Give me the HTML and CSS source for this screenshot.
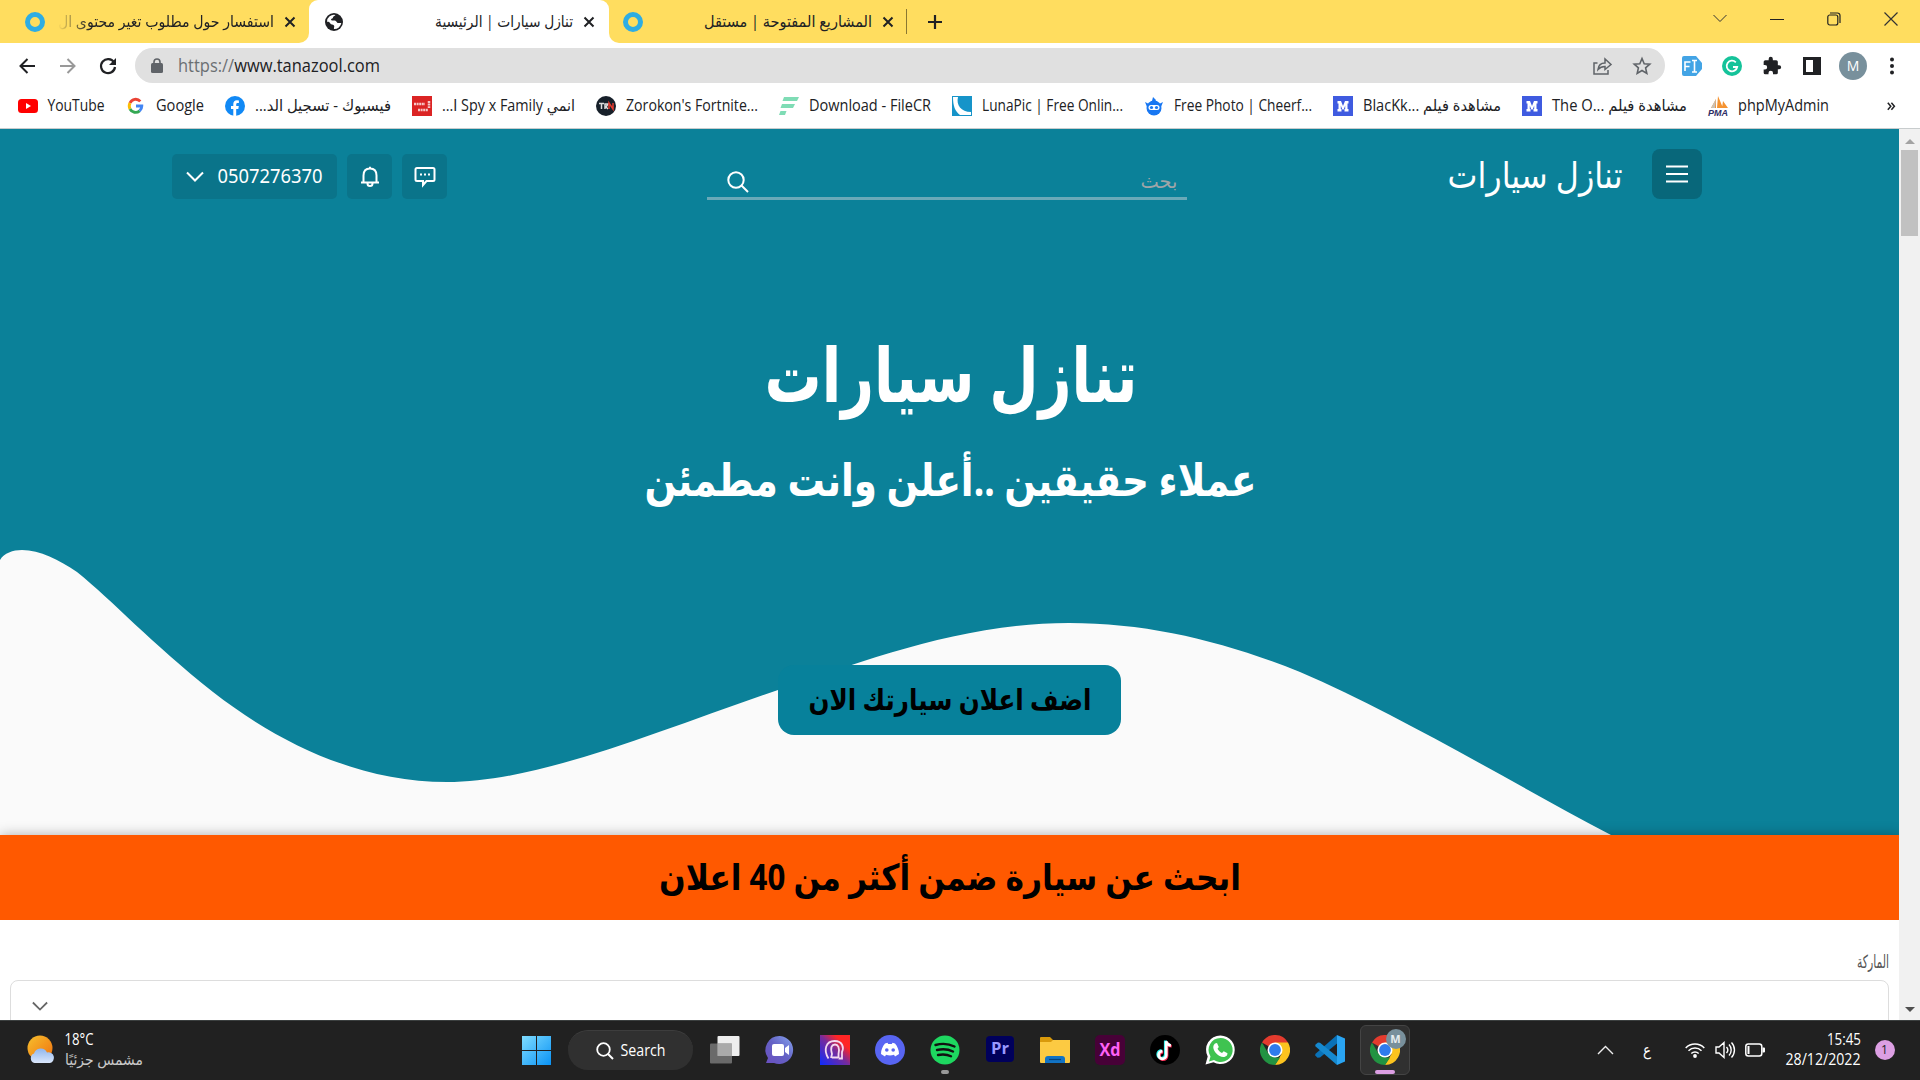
FILE: index.html
```html
<!DOCTYPE html>
<html lang="ar">
<head>
<meta charset="utf-8">
<title>تنازل سيارات | الرئيسية</title>
<link rel="stylesheet" href="styles.css">
</head>
<body>
<svg width="0" height="0" class="defs">
  <defs>
    <symbol id="x" viewBox="0 0 12 12"><path d="M1.500 1.500l9 9m0-9l-9 9" stroke="#202124" stroke-width="2"/></symbol>
    <symbol id="down" viewBox="0 0 18 12"><path d="M1 1.500l8 8 8-8" fill="none" stroke="currentColor" stroke-width="2"/></symbol>
    <symbol id="mbox" viewBox="0 0 20 20"><path fill="#3f5be0" d="M0 0h20v20H0z"/><path fill="#fff" d="M4.500 5h3.500l2 5 2-5h3.500v2.500h-1v5.500h1v2.500h-4v-2.500h.7v-3.500l-1.500 4h-1.400l-1.500-4v3.500h.7v2.500h-4v-2.500h1V7.500h-1z"/></symbol>
    <symbol id="chrome" viewBox="0 0 30 30"><path fill="#e33b2e" d="M15 15L2 7.500A15 15 0 0 1 28 7.500z"/><path fill="#fcc31e" d="M15 7.500h13A15 15 0 0 1 15 30l6.500-11z"/><path fill="#229342" d="M2 7.500l6.500 11.300L15 22.500l5 .2L15 30A15 15 0 0 1 2 7.500z"/><circle cx="15" cy="15" r="7.500" fill="#fff"/><circle cx="15" cy="15" r="5.900" fill="#2f7bed"/></symbol>
  </defs>
</svg>

<header class="tabs">
  <div class="tab first">
    <i class="ring"></i>
    <svg class="title fade" width="216" height="24"><text x="108" y="16.500" textLength="216" lengthAdjust="spacingAndGlyphs">استفسار حول مطلوب تغير محتوى ال</text></svg>
    <svg class="close" width="12" height="12"><use href="#x"/></svg>
  </div>
  <div class="tab active">
    <svg width="18" height="18" viewBox="0 0 18 18"><circle cx="9" cy="9" r="9" fill="#202124"/><path fill="#fff" d="M10.500 2c-1 1.500-2.500 1-2.500 2.500 0 1.200-2 1-2 2.300 0 1.200 3 .4 4.500 1 1.500.7 1 2.200 2.500 2.200h3.300A7 7 0 0 1 9 16c-.4-1.500.8-2.200 0-3.500-.8-1.200-3.500-.8-4-2.500C4.500 8.500 2.500 9 2 8.800A7 7 0 0 1 10.500 2z"/></svg>
    <svg class="title" width="138" height="24"><text x="69" y="16.500" textLength="138" lengthAdjust="spacingAndGlyphs">تنازل سيارات | الرئيسية</text></svg>
    <svg class="close" width="12" height="12"><use href="#x"/></svg>
  </div>
  <div class="tab last">
    <i class="ring"></i>
    <svg class="title" width="168" height="24"><text x="84" y="16.500" textLength="168" lengthAdjust="spacingAndGlyphs">المشاريع المفتوحة | مستقل</text></svg>
    <svg class="close" width="12" height="12"><use href="#x"/></svg>
  </div>
  <svg class="plus" width="16" height="16"><path d="M8 1v14M1 8h14" stroke="#202124" stroke-width="2.200"/></svg>
  <div class="window">
    <svg width="14" height="9"><path d="M.5 1l6.500 6.500L13.500 1" fill="none" stroke="#333"/></svg>
    <svg width="14" height="14"><path d="M0 7.500h14" stroke="#222"/></svg>
    <svg width="14" height="14"><rect x=".8" y="3" width="10" height="10" rx="2" fill="none" stroke="#222" stroke-width="1.200"/><path d="M3 1h7.500a2.500 2.500 0 0 1 2.500 2.500V11" fill="none" stroke="#222" stroke-width="1.200"/></svg>
    <svg width="14" height="14"><path d="M.5.500l13 13m0-13l-13 13" stroke="#333" stroke-width="1.200"/></svg>
  </div>
</header>

<div class="toolbar">
  <div class="nav">
    <svg width="17" height="16" viewBox="0 0 17 16"><path d="M16 8H2m6.500-7L1.500 8l7 7" fill="none" stroke="#202124" stroke-width="2"/></svg>
    <svg width="17" height="16" viewBox="0 0 17 16"><path d="M1 8h14M8.500 1l7 7-7 7" fill="none" stroke="#999" stroke-width="2"/></svg>
    <svg width="18" height="18" viewBox="0 0 18 18"><path d="M15 5.500A7 7 0 1 0 16 10" fill="none" stroke="#202124" stroke-width="2.200"/><path d="M17 1v7h-7z" fill="#202124"/></svg>
  </div>
  <div class="omnibox">
    <svg width="12" height="15"><rect y="5" width="12" height="10" rx="1.500" fill="#5f6368"/><path d="M3 6V4a3 3 0 0 1 6 0v2" fill="none" stroke="#5f6368" stroke-width="1.600"/></svg>
    <svg class="url" width="202" height="26"><text x="101" y="19" textLength="202" lengthAdjust="spacingAndGlyphs"><tspan fill="#6b6f73">https://</tspan>www.tanazool.com</text></svg>
    <svg class="share" width="20" height="18"><path d="M4.500 6H1v11h14v-4M5 12.500c.5-4.500 3-6.500 7-6.500V2l6 5.500-6 5V9.500c-3 0-5 .7-7 3z" fill="none" stroke="#5f6368" stroke-width="1.500"/></svg>
    <svg width="18" height="18" viewBox="0 0 18 18"><path d="M9 1.500l2.200 5.200 5.600.5-4.200 3.700 1.200 5.500L9 13.500l-4.800 2.900 1.200-5.500L1.200 7.200l5.600-.5z" fill="none" stroke="#5f6368" stroke-width="1.600"/></svg>
  </div>
  <div class="extensions">
    <svg width="20" height="20"><path d="M2 0h12l6 7v6l-6 7H2a2 2 0 0 1-2-2V2a2 2 0 0 1 2-2z" fill="#43a4e5"/><path d="M3 15V6h5.500M3 10.500h4.500M10 4.500h5M10 16h5M12.500 4.500V16" fill="none" stroke="#fff" stroke-width="1.600"/></svg>
    <svg width="20" height="20"><circle cx="10" cy="10" r="10" fill="#15c39a"/><path d="M13.800 6.300A5.300 5.300 0 1 0 15.200 11H11" fill="none" stroke="#fff" stroke-width="1.800"/></svg>
    <svg width="20" height="20" viewBox="0 0 24 24"><path fill="#202124" d="M20.500 11H19V7a2 2 0 0 0-2-2h-4V3.500a2.500 2.500 0 0 0-5 0V5H4a2 2 0 0 0-2 2v3.800h1.500a2.700 2.700 0 0 1 0 5.400H2V20a2 2 0 0 0 2 2h3.800v-1.500a2.700 2.700 0 0 1 5.400 0V22H17a2 2 0 0 0 2-2v-4h1.500a2.500 2.500 0 0 0 0-5z"/></svg>
    <svg width="20" height="20"><path d="M1 1h18v18H1zm3 3v12h7V4z" fill="#202124" fill-rule="evenodd"/></svg>
    <span class="avatar">M</span>
    <svg class="dots" width="4" height="18"><circle cx="2" cy="2.500" r="2"/><circle cx="2" cy="9" r="2"/><circle cx="2" cy="15.500" r="2"/></svg>
  </div>
</div>

<nav class="bookmarks">
  <a><svg width="20" height="20"><rect y="3" width="20" height="14" rx="3.500" fill="#f00"/><path d="M8 7l5 3-5 3z" fill="#fff"/></svg>
    <svg width="57" height="22"><text x="28" y="16" textLength="57" lengthAdjust="spacingAndGlyphs">YouTube</text></svg></a>
  <a><svg width="20" height="20" viewBox="0 0 20 20"><g fill="none" stroke-width="2.900"><path stroke="#ea4335" d="M4 7a6.200 6.200 0 0 1 10.300-1.600"/><path stroke="#fbbc05" d="M4 13a6.500 6.500 0 0 1 0-6"/><path stroke="#34a853" d="M4 13a6.200 6.200 0 0 0 9.600 1.800"/><path stroke="#4285f4" d="M13.600 14.800A6.300 6.300 0 0 0 15.800 10H10"/></g></svg>
    <svg width="48" height="22"><text x="24" y="16" textLength="48" lengthAdjust="spacingAndGlyphs">Google</text></svg></a>
  <a><svg width="20" height="20"><circle cx="10" cy="10" r="10" fill="#1189f5"/><path fill="#fff" d="M8.300 20v-7H6v-3h2.300V8c0-2.500 1.400-3.800 3.600-3.800l2 .2V7h-1.200c-1.200 0-1.500.7-1.500 1.400V10h2.600l-.5 3h-2.100v7z"/></svg>
    <svg width="136" height="22"><text x="68" y="16" textLength="136" lengthAdjust="spacingAndGlyphs" direction="rtl">فيسبوك - تسجيل الد...</text></svg></a>
  <a><svg width="20" height="20"><path fill="#db2424" d="M0 0h20v20H0z"/><path d="M2 8h11M6 14h10M17 5v7" stroke="#fff" stroke-width="2.500" stroke-dasharray="2 .6" opacity=".75"/></svg>
    <svg width="133" height="22"><text x="66.500" y="16" textLength="133" lengthAdjust="spacingAndGlyphs" direction="rtl">انمي Spy x Family ا...</text></svg></a>
  <a><svg width="20" height="20"><circle cx="10" cy="10" r="10" fill="#17202a"/><path d="M3 7.500h5M5.500 7v6M9 13V8h3l-2 3 2 2" fill="none" stroke="#ddd" stroke-width="1.500"/><path d="M13 13V7l4 6V7" fill="none" stroke="#e63a2e" stroke-width="1.500"/></svg>
    <svg width="132" height="22"><text x="66" y="16" textLength="132" lengthAdjust="spacingAndGlyphs">Zorokon's Fortnite...</text></svg></a>
  <a><svg width="20" height="20"><path fill="#7fdcb5" d="M5 1h15l-2 4H3.500zM3 8h13l-2 4H1.500zM1.500 15h6l-1.500 4H0z"/></svg>
    <svg width="122" height="22"><text x="61" y="16" textLength="122" lengthAdjust="spacingAndGlyphs">Download - FileCR</text></svg></a>
  <a><svg width="20" height="20"><path fill="#1694c9" d="M0 0h20v20H0z"/><path fill="#fff" d="M1 1h5c-2 8 3 15 13 15v3H8C3 15 1 10 1 1z"/></svg>
    <svg width="141" height="22"><text x="70.500" y="16" textLength="141" lengthAdjust="spacingAndGlyphs">LunaPic | Free Onlin...</text></svg></a>
  <a><svg width="20" height="20"><path d="M1 6l4 2a8 8 0 0 1 10 0l4-2-2 5a7 7 0 0 1-14 0zM8 5l1-4 3 3-1 2z" fill="#1877f2"/><circle cx="10" cy="12" r="7.500" fill="#1877f2"/><rect x="4.500" y="9" width="11" height="5" rx="2.500" fill="#fff"/><circle cx="7.500" cy="11.500" r="1.600" fill="#1877f2"/><circle cx="12.500" cy="11.500" r="1.600" fill="#1877f2"/></svg>
    <svg width="138" height="22"><text x="69" y="16" textLength="138" lengthAdjust="spacingAndGlyphs">Free Photo | Cheerf...</text></svg></a>
  <a><svg width="20" height="20"><use href="#mbox"/></svg>
    <svg width="138" height="22"><text x="69" y="16" textLength="138" lengthAdjust="spacingAndGlyphs">BlacKk... مشاهدة فيلم</text></svg></a>
  <a><svg width="20" height="20"><use href="#mbox"/></svg>
    <svg width="135" height="22"><text x="67.500" y="16" textLength="135" lengthAdjust="spacingAndGlyphs">The O... مشاهدة فيلم</text></svg></a>
  <a><svg width="20" height="20"><path d="M3 12l5-9v9zM9 12l1-12 5 12zM14 12l1-7 5 7z" fill="#f59331"/><path d="M3 12l5-9-1 9z" fill="#c9c2b8"/><text class="pma" x="10" y="19.500" textLength="20" lengthAdjust="spacingAndGlyphs">PMA</text></svg>
    <svg width="91" height="22"><text x="45.500" y="16" textLength="91" lengthAdjust="spacingAndGlyphs">phpMyAdmin</text></svg></a>
  <svg class="more" width="8" height="9"><path d="M.8.800l3 3.500-3 3.500M4.400.800l3 3.500-3 3.500" fill="none" stroke="#202124" stroke-width="1.500"/></svg>
</nav>

<main class="viewport">
  <div class="page">
    <section class="hero">
      <svg class="wave" width="1899" height="706"><path fill="#fafafa" d="M0 431C4 424 13 421 22 421C40 421 59 431 77 443C113 472 150 513 213 563C280 615 360 653 447 653C540 653 660 601 778 561C862 533 960 494 1069 494C1150 494 1225 513 1300 543C1400 586 1505 650 1611 706H0z"/></svg>
      <div class="bar">
        <div class="account">
          <span class="chip phone"><svg width="18" height="12"><use href="#down"/></svg><svg width="105" height="26"><text x="52" y="19" textLength="105" lengthAdjust="spacingAndGlyphs">0507276370</text></svg></span>
          <span class="chip"><svg width="20" height="22" viewBox="0 0 20 22"><path d="M1 16.500h18M3.500 16V9.500C3.500 5 6 2.500 10 2.500s6.500 2.500 6.500 7V16M7.500 17.500a2.500 2.500 0 0 0 5 0M10 .8v2" fill="none" stroke="#fff" stroke-width="2"/></svg></span>
          <span class="chip"><svg width="22" height="22" viewBox="0 0 22 22"><path d="M3 2h16a1.500 1.500 0 0 1 1.500 1.500v10A1.500 1.500 0 0 1 19 15h-6.500L9 19v-4H3a1.500 1.500 0 0 1-1.500-1.500v-10A1.500 1.500 0 0 1 3 2z" fill="none" stroke="#fff" stroke-width="2"/><path d="M6 8.500h2m2 0h2m2 0h2" stroke="#fff" stroke-width="2"/></svg></span>
        </div>
        <div class="search">
          <svg width="22" height="22"><circle cx="9" cy="9" r="7.700" fill="none" stroke="#fff" stroke-width="2"/><path d="M14.500 14.500l6.500 6.500" stroke="#fff" stroke-width="2"/></svg>
          <svg width="37" height="30"><text x="18" y="21" textLength="37" lengthAdjust="spacingAndGlyphs">بحث</text></svg>
        </div>
        <div class="brand">
          <svg width="174" height="50"><text x="87" y="39" textLength="175" lengthAdjust="spacingAndGlyphs">تنازل سيارات</text></svg>
          <span class="menu"><svg width="24" height="18"><path d="M1 1.500h22M1 9h22M1 16.500h22" stroke="#fff" stroke-width="2.200"/></svg></span>
        </div>
      </div>
      <svg class="h1" width="369" height="90"><text x="183" y="62" textLength="373" lengthAdjust="spacingAndGlyphs">تنازل سيارات</text></svg>
      <svg class="h2" width="609" height="60"><text x="304.500" y="43" textLength="612" lengthAdjust="spacingAndGlyphs" direction="rtl">عملاء حقيقين ..أعلن وانت مطمئن</text></svg>
      <a class="cta"><svg width="281" height="40"><text x="141" y="30" textLength="283" lengthAdjust="spacingAndGlyphs">اضف اعلان سيارتك الان</text></svg></a>
    </section>
    <section class="banner"><svg width="579" height="60"><text x="290" y="42" textLength="582" lengthAdjust="spacingAndGlyphs" direction="rtl">ابحث عن سيارة ضمن أكثر من 40 اعلان</text></svg></section>
    <section class="filters">
      <svg class="label" width="32" height="26"><text x="16" y="19" textLength="32" lengthAdjust="spacingAndGlyphs">الماركة</text></svg>
      <div class="select"><svg width="16" height="11"><use href="#down"/></svg></div>
    </section>
  </div>
  <aside class="scroll">
    <svg width="10" height="5"><path d="M0 5l5-5 5 5z" fill="#a3a3a3"/></svg>
    <i></i>
    <svg class="bottom" width="10" height="5"><path d="M0 0l5 5 5-5z" fill="#505050"/></svg>
  </aside>
</main>

<footer class="taskbar">
  <div class="weather">
    <svg width="29" height="30"><defs><linearGradient id="sun" x2="1" y2="1"><stop stop-color="#f6c02d"/><stop offset="1" stop-color="#f0700f"/></linearGradient><linearGradient id="cl" x2="0" y2="1"><stop stop-color="#8fb6ee"/><stop offset="1" stop-color="#dbe7fb"/></linearGradient></defs><circle cx="13" cy="13" r="12.500" fill="url(#sun)"/><path d="M7.500 28a5 5 0 0 1-.5-9.500 7 7 0 0 1 13-1 5.300 5.300 0 0 1 3 10.500z" fill="url(#cl)"/></svg>
    <div class="lines">
      <svg width="78" height="20"><text x="14" y="15" textLength="29" lengthAdjust="spacingAndGlyphs">18°C</text></svg>
      <svg class="dim" width="78" height="20"><text x="39" y="15" textLength="78" lengthAdjust="spacingAndGlyphs">مشمس جزئيًا</text></svg>
    </div>
  </div>
  <div class="apps">
    <span class="win"><svg width="29" height="29"><defs><linearGradient id="w" x2="1" y2="1"><stop stop-color="#7fdcff"/><stop offset="1" stop-color="#0a93f5"/></linearGradient></defs><path fill="url(#w)" d="M0 0h14v14H0zM15 0h14v14H15zM0 15h14v14H0zM15 15h14v14H15z"/></svg></span>
    <span class="pill"><svg width="18" height="18"><circle cx="7.500" cy="7.500" r="6.300" fill="none" stroke="#fff" stroke-width="1.800"/><path d="M12 12l5 5" stroke="#fff" stroke-width="2"/></svg><svg width="45" height="22"><text x="22" y="16" textLength="45" lengthAdjust="spacingAndGlyphs">Search</text></svg></span>
    <span class="app"><svg width="30" height="30"><rect x="7.500" y="1" width="22" height="20" rx="1" fill="#eee"/><rect y="8.500" width="22" height="20" rx="1" fill="#777" opacity=".85"/><path d="M7.500 8.500H22V21H7.500z" fill="#aaa"/></svg></span>
    <span class="app"><svg width="30" height="30"><defs><linearGradient id="tm" x1="1" x2="0" y2="1"><stop stop-color="#86a5f0"/><stop offset=".5" stop-color="#6461c4"/><stop offset="1" stop-color="#6a4fc0"/></linearGradient></defs><path d="M15 1a14 14 0 1 1-6 27H1l2-5A14 14 0 0 1 15 1z" fill="url(#tm)"/><rect x="7" y="9" width="12" height="12" rx="2" fill="#fff"/><path d="M20 13l4-3v10l-4-3z" fill="#fff"/></svg></span>
    <span class="app"><svg width="30" height="30"><defs><linearGradient id="pt" y1="1" x2="1" y2="0"><stop stop-color="#0b2bff"/><stop offset=".5" stop-color="#7a2b9a"/><stop offset=".75" stop-color="#ff2525"/></linearGradient></defs><path fill="url(#pt)" d="M0 0h30v30H0z"/><path d="M8.500 23.500C3 15 6 6 14.500 6S24 13 22 17v6.500h-3.500M11 23l1-4c-2-7 0-9.500 3-9.500s5 3 3.500 9.500v4M12 22.500h6" fill="none" stroke="#f4d9f0" stroke-width="1.800"/></svg></span>
    <span class="app"><svg width="30" height="30"><circle cx="15" cy="15" r="15" fill="#5865f2"/><path fill="#fff" d="M10 8.500l2.500-.7.700 1.200h3.600l.7-1.200 2.500.7c2.500 3 4 6.500 4 10.500L20 21.500l-1-1.700a12 12 0 0 1-8 0l-1 1.700L6 19c0-4 1.500-7.500 4-10.500z"/><circle cx="11.800" cy="15" r="1.800" fill="#5865f2"/><circle cx="18.200" cy="15" r="1.800" fill="#5865f2"/></svg></span>
    <span class="app running"><svg width="30" height="30"><circle cx="15" cy="15" r="14.500" fill="#1ed760"/><path d="M5.500 10c7-2 13-1.500 19 1.500M7 15c6-1.500 11-1 16 1.500M8 20c5-1 9-.7 13 1.300" fill="none" stroke="#111" stroke-width="2.400" stroke-linecap="round"/></svg></span>
    <span class="app"><svg width="28" height="28"><rect y="0" width="28" height="26" rx="4" fill="#00005b"/><text class="adobe pr" x="14" y="18" textLength="18" lengthAdjust="spacingAndGlyphs">Pr</text></svg></span>
    <span class="app"><svg width="30" height="30"><path d="M0 3a1 1 0 0 1 1-1h9l3 3v6H0z" fill="#d99a0b"/><path d="M0 7h11l2-2h17v22a1 1 0 0 1-1 1H1a1 1 0 0 1-1-1z" fill="#fcca42"/><path d="M5 28v-4a3 3 0 0 1 3-3h14a3 3 0 0 1 3 3v4z" fill="#1273c4"/><path d="M9 24.500h12" stroke="#07437c" stroke-width="1.200"/></svg></span>
    <span class="app"><svg width="30" height="30"><rect width="30" height="30" rx="5" fill="#470137"/><text class="adobe xd" x="15" y="21" textLength="21" lengthAdjust="spacingAndGlyphs">Xd</text></svg></span>
    <span class="app"><svg width="30" height="30"><circle cx="15" cy="15" r="15" fill="#000"/><g fill="none" stroke-width="2.800"><path stroke="#25f4ee" d="M15.300 5.500v14a3.800 3.800 0 1 1-3.800-4M15.300 5.500c.3 2.500 2 4 4.700 4.200"/><path stroke="#fe2c55" d="M17 7v14a3.800 3.800 0 1 1-3.800-4M17 7c.3 2.500 2 4 4.700 4.200"/><path stroke="#fff" d="M16.200 6.200v14a3.800 3.800 0 1 1-3.800-4M16.200 6.200c.3 2.500 2 4 4.700 4.200"/></g></svg></span>
    <span class="app"><svg width="30" height="30"><path d="M15.500.500a14.300 14.300 0 1 1-7 26.800L.5 29.500l2.200-8A14.300 14.300 0 0 1 15.500.500z" fill="#fff"/><path d="M15.500 3a12 12 0 1 1-6.500 22l-5 1.500 1.500-5A12 12 0 0 1 15.500 3z" fill="#3fc351"/><path d="M10 8.500l2-.5 1.800 4-1.300 1.800c1 2 2.500 3.300 4.500 4.200l1.700-1.800 3.800 2-.4 2c-3 3.500-8 1-10.500-1.500S6.500 11.500 10 8.500z" fill="#fff"/></svg></span>
    <span class="app"><svg width="30" height="30"><use href="#chrome"/></svg></span>
    <span class="app"><svg width="30" height="30"><path d="M22 0v8.500L5 22.500 2.500 22.800.3 20.500v-1.600L22 0z" fill="#0a72b8"/><path d="M.3 9.800L3 7.500l2 .2L22 21.500V30L.3 11.300z" fill="#1689cf"/><path d="M22 0l8 3.500v23L22 30z" fill="#2aa5f3"/></svg></span>
    <span class="app current"><svg width="30" height="30"><use href="#chrome"/></svg><b>M</b></span>
  </div>
  <div class="tray">
    <svg class="up" width="17" height="10"><path d="M1 9l7.500-7.500L16 9" fill="none" stroke="#eee" stroke-width="1.400"/></svg>
    <svg class="lang" width="10" height="24"><text x="5" y="17" textLength="8" lengthAdjust="spacingAndGlyphs">ع</text></svg>
    <svg width="20" height="16"><g fill="none" stroke="#fff" stroke-width="1.500"><path d="M.7 6a13 13 0 0 1 18.600 0M3.500 8.800a9.200 9.200 0 0 1 13 0M6.300 11.500a5.300 5.300 0 0 1 7.400 0"/></g><circle cx="10" cy="14" r="1.900" fill="#fff"/></svg>
    <svg width="20" height="18"><path d="M1 6h3l5-4.500v15L4 12H1zM11.500 6a4.500 4.500 0 0 1 0 6M14 3.500a8 8 0 0 1 0 11M16.500 1.500a11 11 0 0 1 0 15" fill="none" stroke="#fff" stroke-width="1.400"/></svg>
    <svg width="20" height="14"><rect x=".8" y="1" width="16" height="12" rx="2.500" fill="none" stroke="#fff" stroke-width="1.500"/><path d="M2.500 3h2v8h-2zM17.500 4.500H19a1 1 0 0 1 1 1v3a1 1 0 0 1-1 1h-1.500z" fill="#fff"/></svg>
    <div class="clock">
      <svg width="76" height="20"><text x="59" y="15" textLength="34" lengthAdjust="spacingAndGlyphs">15:45</text></svg>
      <svg width="76" height="20"><text x="38" y="15" textLength="75" lengthAdjust="spacingAndGlyphs">28/12/2022</text></svg>
    </div>
    <span class="count">1</span>
  </div>
</footer>
</body>
</html>
```
FILE: styles.css
```css
* { box-sizing: border-box; }
body {
  margin: 0;
  width: 1920px;
  height: 1080px;
  overflow: hidden;
  display: flex;
  flex-direction: column;
  background: #fff;
  font-family: "Open Sans", "Noto Sans", "DejaVu Sans", sans-serif;
  color: #202124;
}
svg { display: block; flex: none; overflow: visible; }
text { text-anchor: middle; fill: currentColor; }
.defs { position: absolute; }

/* Tab strip */
.tabs { height: 43px; flex: none; display: flex; align-items: center; background: linear-gradient(#fff, #fff) 299px 33px / 320px 10px no-repeat, #ffdd5f; font-size: 15.500px; }
.tab { height: 43px; display: flex; align-items: center; background: #ffdd5f; }
.tab .title { margin-left: auto; }
.tab .close { margin-left: 10px; }
.first { width: 309px; padding: 0 13px 0 25px; border-bottom-right-radius: 10px; }
.active { width: 300px; padding: 0 14px 0 16px; background: #fff; border-radius: 9px 9px 0 0; }
.last { position: relative; width: 298px; padding: 0 13px 0 14px; border-bottom-left-radius: 10px; }
.last::after { content: ""; position: absolute; right: 0; top: 9px; width: 1px; height: 25px; background: #8a7731; }
.ring { width: 20px; height: 20px; border: 5.500px solid #2eade4; border-radius: 50%; }
.fade { -webkit-mask-image: linear-gradient(90deg, transparent, #000 32px); mask-image: linear-gradient(90deg, transparent, #000 32px); }
.plus { margin-left: 20px; }
.window { margin: -6px 22px 0 auto; display: flex; align-items: center; gap: 43px; }

/* Toolbar */
.toolbar { height: 45px; flex: none; display: flex; align-items: center; background: #fff; }
.nav { width: 135px; padding-left: 19px; display: flex; align-items: center; gap: 23px; }
.omnibox { width: 1530px; height: 35px; padding: 0 14px 0 16px; display: flex; align-items: center; background: #e0e0e0; border-radius: 18px; font-size: 18px; }
.url { margin-left: 15px; }
.share { margin: 0 20px 0 auto; }
.extensions { flex: 1; padding-left: 17px; display: flex; align-items: center; gap: 20px; }
.avatar { width: 28px; height: 28px; margin-left: -3px; border-radius: 50%; background: #78909c; color: #fff; font-size: 14px; line-height: 28px; text-align: center; }
.dots { margin-left: 3px; fill: #202124; }

/* Bookmarks */
.bookmarks { height: 41px; flex: none; display: flex; align-items: center; gap: 21px; padding: 0 25px 4px 18px; border-bottom: 1px solid #c8cccd; font-size: 15.500px; }
.bookmarks a { display: flex; align-items: center; gap: 10px; }
.pma { font: italic bold 9px "Liberation Sans", sans-serif; fill: #2d2d64; }
.more { margin-left: auto; }

/* Page */
.viewport { flex: 1; min-height: 0; display: flex; overflow: hidden; }
.page { width: 1899px; }
.page text { font-family: "Noto Sans", "DejaVu Sans", sans-serif; }
.hero { position: relative; height: 706px; display: flex; flex-direction: column; align-items: center; background: #0b8199; color: #fff; }
.wave { position: absolute; left: 0; top: 0; }
.bar { position: relative; width: 1530px; height: 72px; margin-right: 25px; padding-top: 20px; display: flex; justify-content: space-between; align-items: flex-start; }
.account { width: 535px; margin-top: 5px; display: flex; gap: 10px; font-size: 19px; }
.chip { width: 45px; height: 45px; display: flex; align-items: center; justify-content: center; background: #0a748a; border-radius: 5px; }
.phone { width: 165px; gap: 14px; }
.search { width: 480px; height: 51px; padding: 18px 9px 0 20px; display: flex; align-items: center; justify-content: space-between; border-bottom: 3px solid #6aa9b8; font-size: 19px; }
.search text { fill: #9fa5a8; }
.brand { width: 515px; display: flex; justify-content: flex-end; align-items: center; gap: 30px; font-size: 36px; }
.menu { width: 50px; height: 50px; display: flex; align-items: center; justify-content: center; background: #08677a; border-radius: 8px; }
.h1 { position: relative; margin: 139px 0 0 5px; font-size: 75px; font-weight: 700; }
.h2 { position: relative; margin: 23px 0 0 2px; font-size: 45px; font-weight: 700; }
.cta { position: relative; width: 343px; height: 70px; margin-top: 152px; display: flex; align-items: center; justify-content: center; border-radius: 16px; background: #07819b; color: #000; font-size: 29.500px; font-weight: 700; }
.banner { position: relative; height: 85px; display: flex; align-items: center; justify-content: center; background: #ff5900; color: #000; font-size: 36px; font-weight: 700; box-shadow: 0 0 12px rgba(0, 0, 0, .3); }
.filters { position: relative; height: 140px; padding: 29px 10px 0; background: #fff; }
.label { margin-left: auto; font-size: 18px; color: #555; }
.select { height: 60px; margin-top: 5px; padding: 20px 21px; border: 1px solid #ddd; border-radius: 8px; color: #666; }
.scroll { position: relative; width: 21px; padding-top: 10px; display: flex; flex-direction: column; align-items: center; background: #f1f1f1; }
.scroll i { width: 17px; height: 86px; margin-top: 6px; background: #c1c1c1; }
.scroll .bottom { margin: auto 0 8px; }

/* Taskbar */
.taskbar { height: 60px; flex: none; display: grid; grid-template-columns: 509px 1fr 360px; align-items: center; padding-bottom: 1px; background: #212121; border-top: 1px solid #3b3f3f; color: #fff; font-size: 15.500px; }
.weather { display: flex; align-items: center; gap: 9px; padding-left: 27px; }
.dim { color: #c8c8c8; }
.apps { display: flex; align-items: center; }
.win { width: 59px; padding-left: 13px; }
.pill { width: 125px; height: 40px; margin-right: 4.500px; display: flex; align-items: center; justify-content: center; gap: 7px; padding-left: 1px; background: #303030; border-radius: 20px; border-top: 1px solid #3d3d3d; }
.app { position: relative; width: 55px; height: 50px; display: flex; align-items: center; justify-content: center; }
.adobe { font-weight: 700; }
.pr { fill: #9999ff; font-size: 16px; }
.xd { fill: #ff61f6; font-size: 17px; }
.running::after { content: ""; position: absolute; bottom: 1px; left: 23px; width: 8px; height: 4px; border-radius: 2px; background: #999; }
.current { width: 50px; margin-left: 2px; border: 1px solid #444; border-radius: 6px; background: #303030; }
.current::after { content: ""; position: absolute; bottom: 0; left: 14px; width: 20px; height: 4px; border-radius: 2px; background: #dc9fe3; }
.current b { position: absolute; left: 25px; top: 3px; width: 20px; height: 20px; border-radius: 50%; background: #78909c; font-size: 11px; line-height: 20px; text-align: center; color: #e6ecef; }
.tray { display: flex; align-items: center; gap: 10px; padding-left: 36.500px; }
.up { margin-right: 18px; }
.lang { margin-right: 23px; font-size: 16px; }
.clock { margin-left: 10px; }
.count { width: 20px; height: 20px; margin-left: 4px; border-radius: 50%; background: #dc9fe3; color: #222; font-size: 12px; line-height: 20px; text-align: center; }
```
